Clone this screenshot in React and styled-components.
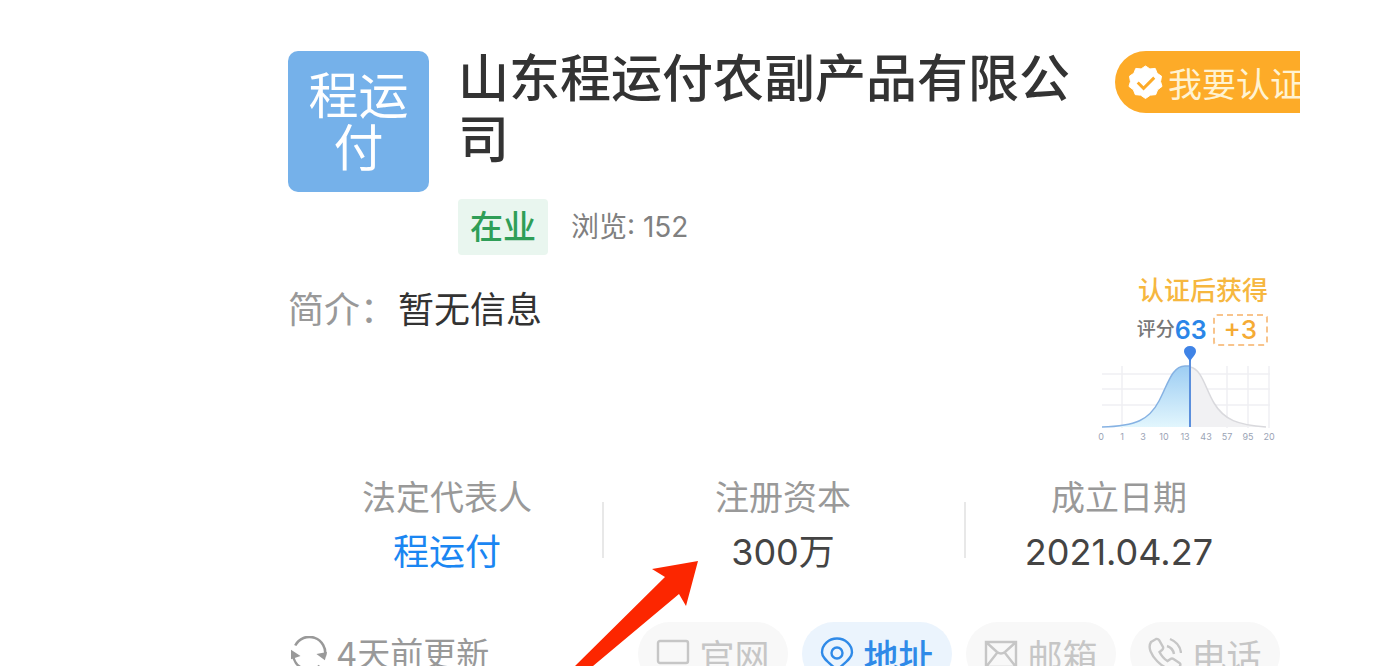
import React from 'react';
import styled, { createGlobalStyle } from 'styled-components';

const GlobalStyle = createGlobalStyle`
  * {
    box-sizing: border-box;
  }

  body {
    margin: 0;
    background: #fff;
    color: #333;
    font-family: Inter, "Noto Sans CJK SC", sans-serif;
  }
`
const Page = styled.div`
  height: 100vh;
  overflow: hidden;
  padding: 0 76px 0 288px;
`
const Card = styled.main`
  position: relative;
  padding-top: 48px;
`
const Header = styled.header`
  display: flex;
  align-items: flex-start;
  gap: 29px;
`
const Logo = styled.div`
  display: flex;
  flex: none;
  align-items: center;
  justify-content: center;
  width: 141px;
  height: 141px;
  margin-top: 3px;
  padding: 0 18px;
  border-radius: 10px;
  background: #75b1ea;
  color: #fff;
  font-size: 50px;
  line-height: 52px;
  text-align: center;
`
const Company = styled.div`
  flex: 1;
  min-width: 0;
`
const Name = styled.h1`
  margin: 0;
  font-size: 51px;
  font-weight: 500;
  line-height: 61px;
`
const Tags = styled.div`
  display: flex;
  align-items: center;
  gap: 23px;
  margin-top: 29px;
`
const Status = styled.span`
  padding: 0 12px;
  border-radius: 4px;
  background: #e9f6ef;
  color: #2f9e57;
  font-size: 33px;
  font-weight: 500;
  line-height: 56px;
`
const Views = styled.span`
  color: #808080;
  font-size: 28px;
  line-height: 56px;
`
const CertifyButton = styled.button`
  display: flex;
  flex: none;
  align-items: center;
  gap: 5px;
  width: 185px;
  height: 62px;
  margin-top: 3px;
  padding: 0 0 0 13px;
  overflow: hidden;
  border: none;
  border-radius: 31px 0 0 31px;
  background: #fdab28;
  color: #fff3d2;
  font-family: inherit;
  font-size: 34px;
  white-space: nowrap;

  svg {
    flex: none;
  }
`
const Overview = styled.section`
  display: flex;
  align-items: flex-start;
  justify-content: space-between;
  padding: 22px 20px 0 0;
`
const Intro = styled.p`
  display: flex;
  gap: 2px;
  margin: 13px 0 0;
  font-size: 36px;
  line-height: 40px;
`
const Muted = styled.span`
  color: #999;
`
const Score = styled.div`
  display: flex;
  flex-direction: column;
  align-items: flex-end;
  width: 182px;
`
const ScoreTitle = styled.div`
  padding-right: 12px;
  color: #f6b73f;
  font-size: 26px;
  font-weight: 500;
  line-height: 28px;
`
const ScoreLine = styled.div`
  display: flex;
  align-items: center;
  height: 32px;
  margin-top: 9px;
  padding-right: 12px;
  color: #777;
  font-size: 19px;
  font-weight: 500;
  line-height: 32px;

  strong {
    color: #2a86e8;
    font-size: 25px;
    font-weight: 600;
  }
`
const Bonus = styled.span`
  margin-left: 6px;
  padding: 0 9px;
  border: 2px dashed #f8c48c;
  border-radius: 4px;
  color: #f5ab35;
  font-size: 26px;
  font-weight: 500;
  line-height: 28px;
`
const Curve = styled.svg`
  display: block;
  width: 182px;
  height: 96px;
`
const Facts = styled.dl`
  display: grid;
  grid-template-columns: 6fr 7fr 6fr;
  margin: 34px 0 0;
  padding: 0 26px 0 4px;
`
const Fact = styled.div`
  display: flex;
  position: relative;
  flex-direction: column;
  align-items: center;
  gap: 8px;

  & + &::before {
    content: "";
    position: absolute;
    top: 26px;
    bottom: 18px;
    left: 0;
    width: 2px;
    background: #e8e8e8;
  }
`
const FactLabel = styled.dt`
  color: #999;
  font-size: 34px;
  line-height: 44px;
`
const FactValue = styled.dd`
  margin: 0;
  color: #444;
  font-size: 36px;
  line-height: 48px;

  a {
    color: #1a86f2;
    text-decoration: none;
  }
`
const Footer = styled.footer`
  display: flex;
  align-items: center;
  justify-content: space-between;
  margin-top: 46px;
  padding: 0 20px 0 3px;
`
const Refresh = styled.button`
  display: flex;
  align-items: center;
  gap: 9px;
  padding: 0;
  border: none;
  background: none;
  color: #999;
  font-family: inherit;
  font-size: 33px;
  line-height: 64px;
`
const Contacts = styled.nav`
  display: flex;
  gap: 14px;
`
const Contact = styled.a`
  display: flex;
  align-items: center;
  justify-content: center;
  gap: 9px;
  width: 150px;
  height: 64px;
  border-radius: 32px;
  background: ${({ $active }) => $active ? '#ebf4fd' : '#f8f8f8'};
  color: ${({ $active }) => $active ? '#2f8ae8' : '#c6c6c6'};
  font-size: 35px;
  font-weight: ${({ $active }) => $active ? 500 : 400};
  text-decoration: none;
`
const Arrow = styled.svg`
  position: absolute;
  top: 560px;
  left: 280px;
  width: 132px;
  height: 110px;
  pointer-events: none;
`

const Icon = ({ children, size = 34 }) => (
  <svg width={size} height={size} viewBox="0 0 34 34" fill="none" stroke="currentColor" strokeWidth="2.4" aria-hidden="true">
    {children}
  </svg>
)

const facts = [
  { label: '法定代表人', value: <a href="#person">程运付</a> },
  { label: '注册资本', value: '300万' },
  { label: '成立日期', value: '2021.04.27' },
];

const contacts = [
  { id: 'site', label: '官网', icon: <path d="M4 4h26a2 2 0 0 1 2 2v18a2 2 0 0 1-2 2H4a2 2 0 0 1-2-2V6a2 2 0 0 1 2-2zM8 31h18" /> },
  {
    id: 'address',
    label: '地址',
    active: true,
    icon: <><path d="M17 33C11 27 2 22 2 15.500a15 14 0 0 1 30 0C32 22 23 27 17 33z" /><circle cx="17" cy="16" r="5.500" /></>,
  },
  { id: 'mail', label: '邮箱', icon: <path d="M2 5h30v25H2zM2 5l11 10q4 3 8 0L32 5M2 30l11-14M32 30L21 16" /> },
  {
    id: 'phone',
    label: '电话',
    icon: <path d="M3 5l5-3q2-.5 3 1l4 7q.6 1.600-1 3l-2.500 2q3 6 8 9l3-2q1.500-1 3 0l6 4q1.500 1 .5 3l-3 4C18 36-4 16 3 5zM19 9q6 2 7 8M22 2q10 4 11 14" />,
  },
];

const ticks = ['0', '1', '3', '10', '13', '43', '57', '95', '20'];

const ScoreCurve = () => (
  <Curve viewBox="0 0 182 96" role="img" aria-label="评分">
    <defs>
      <linearGradient id="fill" x1="0" y1="0" x2="0" y2="1">
        <stop offset="0" stopColor="#9dcdf3" />
        <stop offset="1" stopColor="#e2f6fd" />
      </linearGradient>
    </defs>
    <path d="M4 28H172M4 43H172M4 59H172M24 20V82M129 20V82M150 20V82M171 20V82" stroke="#f0f0f3" strokeWidth="1.500" />
    <path d="M92 21C104 23 107 42 116 57C126 74 140 79 168 81H92z" fill="#f1f1f3" />
    <path d="M92 21C104 23 107 42 116 57C126 74 140 79 168 81" fill="none" stroke="#d9d9dd" strokeWidth="1.500" />
    <path d="M4 81C38 80 51 74 61 55C70 38 74 20 87 20H92V81z" fill="url(#fill)" />
    <path d="M4 81C38 80 51 74 61 55C70 38 74 20 87 20H92" fill="none" stroke="#86b2e3" strokeWidth="1.500" />
    <path d="M92 8V81" stroke="#5b8fdc" strokeWidth="2" />
    <path d="M92 16C90 11 86 9 86 5a6 5 0 0 1 12 0C98 9 94 11 92 16z" fill="#3f83e6" />
    {ticks.map((tick, index) =>
      <text key={tick} x={3 + index * 21} y="94" fill="#9aa3b5" fontSize="9" textAnchor="middle">{tick}</text>
    )}
  </Curve>
)

const App = () => (
  <Page>
    <GlobalStyle />
    <Card>
      <Header>
        <Logo>程运付</Logo>
        <Company>
          <Name>山东程运付农副产品有限公司</Name>
          <Tags>
            <Status>在业</Status>
            <Views>浏览: 152</Views>
          </Tags>
        </Company>
        <CertifyButton type="button">
          <svg width="35" height="35" viewBox="0 0 36 36" aria-hidden="true">
            <path d="M18 1l4.500 3 5.500-.5 2 5 4.500 3-1 5.500 1.500 5-4.500 3.500-2 5-5.500.5-5 3.500-5-3.500-5.500-.5-2-5L1 22l1.500-5-1-5.500 4.500-3 2-5 5.500.5z" fill="#fff" stroke="#fff" strokeLinejoin="round" />
            <path d="M10 18l6 6 11-11" fill="none" stroke="#fdab28" strokeWidth="3" />
          </svg>
          我要认证
        </CertifyButton>
      </Header>
      <Overview>
        <Intro><Muted>简介：</Muted>暂无信息</Intro>
        <Score>
          <ScoreTitle>认证后获得</ScoreTitle>
          <ScoreLine>评分<strong>63</strong><Bonus>+3</Bonus></ScoreLine>
          <ScoreCurve />
        </Score>
      </Overview>
      <Facts>
        {facts.map(({ label, value }) =>
          <Fact key={label}>
            <FactLabel>{label}</FactLabel>
            <FactValue>{value}</FactValue>
          </Fact>
        )}
      </Facts>
      <Footer>
        <Refresh type="button">
          <Icon size={36}>
            <path d="M4 9a15 15 0 0 1 28 10M27 28a15 15 0 0 1-25-11" />
            <path d="M24 17l8 6 2-8zM0 22V13l9 6z" fill="currentColor" stroke="none" />
          </Icon>
          4天前更新
        </Refresh>
        <Contacts>
          {contacts.map(({ id, label, icon, active }) =>
            <Contact key={id} href={`#${id}`} $active={active}>
              <Icon>{icon}</Icon>
              {label}
            </Contact>
          )}
        </Contacts>
      </Footer>
      <Arrow viewBox="0 0 132 110" aria-hidden="true">
        <path d="M130 1L84 9l13 8L7 106h18l86-72 7 12z" fill="#fc2600" />
      </Arrow>
    </Card>
  </Page>
)

export default App;
